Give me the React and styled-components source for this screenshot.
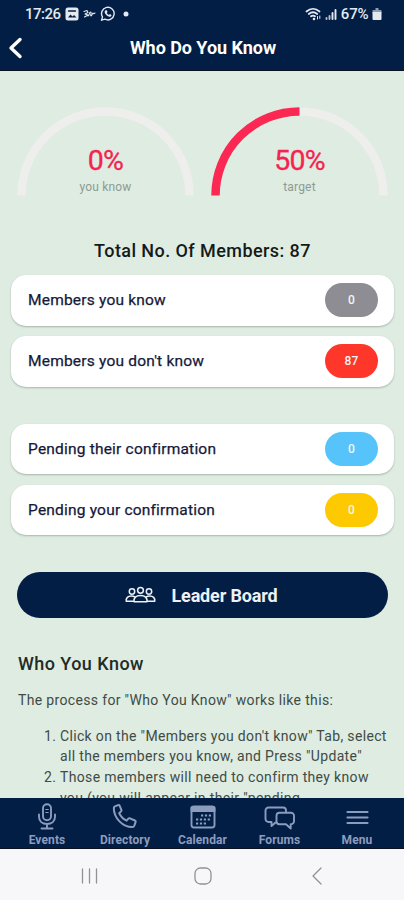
import React from "react";
import styled, { createGlobalStyle } from "styled-components";

const GlobalStyle = createGlobalStyle`
  * {
    box-sizing: border-box;
  }
  body {
    margin: 0;
    font-family: Roboto, "Liberation Sans", sans-serif;
  }
`;

const Screen = styled.div`
  display: flex;
  flex-direction: column;
  width: 404px;
  height: 900px;
  overflow: hidden;
  background: #deece2;
`;

const Header = styled.header`
  flex: none;
  height: 71px;
  background: #021e45;
  border-bottom: 1px solid #0a1220;
  color: #fff;
`;

const StatusBar = styled.div`
  display: flex;
  align-items: center;
  justify-content: space-between;
  height: 28px;
  padding: 0 22px 0 25px;
  font-size: 15px;
  font-weight: 500;
  color: #e4e8ef;
`;

const StatusGroup = styled.div`
  display: flex;
  align-items: center;
  gap: ${props => props.gap}px;
  letter-spacing: ${props => props.spacing || 0}px;

  svg {
    display: block;
  }
`;

const TitleBar = styled.div`
  display: grid;
  grid-template-columns: 30px 1fr 30px;
  align-items: center;
  height: 39px;
`;

const BackButton = styled.button`
  display: flex;
  height: 24px;
  padding: 0 0 0 8px;
  border: 0;
  background: none;
  color: #fff;
`;

const Title = styled.h1`
  margin: 0;
  padding-left: 2px;
  font-size: 18px;
  font-weight: 700;
  letter-spacing: -0.05px;
  text-align: center;
  white-space: nowrap;
`;

const Content = styled.main`
  flex: 1;
  min-height: 0;
  overflow: hidden;
`;

const Gauges = styled.div`
  display: flex;
  gap: 17px;
  padding: 36px 17px 0;
`;

const GaugeBox = styled.div`
  display: grid;
  width: 177px;
  height: 90px;

  > * {
    grid-area: 1 / 1;
  }
`;

const GaugeText = styled.div`
  padding-top: 37px;
  text-align: center;
`;

const Percent = styled.div`
  font-size: 28.5px;
  line-height: 34px;
  letter-spacing: -0.8px;
  color: #f5234f;
  -webkit-text-stroke: 0.3px #f5234f;
`;

const GaugeLabel = styled.div`
  font-size: 12px;
  line-height: 18px;
  letter-spacing: 0.2px;
  color: #8e9a93;
`;

const Total = styled.h2`
  margin: 43px 0 13px;
  padding-left: 1px;
  font-size: 18px;
  font-weight: 500;
  line-height: 22px;
  letter-spacing: 0.43px;
  text-align: center;
  color: #141a18;
`;

const CardGroup = styled.div`
  display: flex;
  flex-direction: column;
  gap: 10.5px;
  padding: 0 10px 0 11px;
  margin-bottom: 37px;
`;

const Card = styled.div`
  display: flex;
  align-items: center;
  justify-content: space-between;
  height: 50.5px;
  padding: 0 16px 0 17px;
  border-radius: 15px;
  background: #fff;
  box-shadow: 0 1px 2px rgba(60, 80, 70, 0.35);
  font-size: 15.5px;
  letter-spacing: 0.2px;
  color: #15193a;
  -webkit-text-stroke: 0.25px #15193a;
`;

const Badge = styled.span`
  width: 53px;
  height: 34px;
  border-radius: 17px;
  background: ${props => props.color};
  font-size: 12px;
  font-weight: 500;
  line-height: 34px;
  text-align: center;
  color: #f4f5f6;
  -webkit-text-stroke: 0;
`;

const LeaderButton = styled.button`
  display: flex;
  align-items: center;
  justify-content: center;
  gap: 15px;
  width: 371px;
  height: 46px;
  margin: 0 0 0 17px;
  padding: 0 2px 0 0;
  border: 0;
  border-radius: 23px;
  background: #021e45;
  font-family: inherit;
  font-size: 18px;
  font-weight: 700;
  letter-spacing: -0.15px;
  color: #eef1f5;
`;

const Info = styled.section`
  padding: 35px 10px 0 18px;
  font-size: 14px;
  line-height: 20.7px;
  letter-spacing: 0.34px;
  color: #414b45;
`;

const InfoTitle = styled.h3`
  margin: 0 0 15px;
  font-size: 18px;
  font-weight: 500;
  line-height: 22px;
  letter-spacing: 0.45px;
  color: #222b26;
`;

const Paragraph = styled.p`
  margin: 0 0 15px;
`;

const Steps = styled.ol`
  margin: 0;
  padding-left: 42px;
  white-space: nowrap;
`;

const NavBar = styled.nav`
  flex: none;
  display: grid;
  grid-template-columns: 94px 62px 93px 61px 94px;
  height: 51px;
  background: #021e45;
  border-bottom: 1px solid #0a1220;
`;

const NavItem = styled.div`
  display: flex;
  flex-direction: column;
  align-items: center;
  padding-top: 5px;
  font-size: 12px;
  font-weight: 700;
  line-height: 14px;
  letter-spacing: 0.1px;
  white-space: nowrap;
  color: #8c9cbd;

  svg {
    flex: none;
    margin-bottom: 2px;
  }
`;

const SystemBar = styled.footer`
  flex: none;
  display: grid;
  grid-template-columns: 113px 118px 12px;
  align-items: center;
  height: 51px;
  padding: 3px 0 0 80px;
  background: #f7f7f9;
  color: #929295;
`;

const Gauge = ({ value, label }) => {
  const arc = "M4.5 88.5A84 84 0 0 1 172.5 88.5";
  return (
    <GaugeBox>
      <svg width="177" height="90" fill="none" strokeWidth="8.5">
        <path d={arc} stroke="#eeeeed" />
        {value > 0 && (
          <path
            d={arc}
            stroke="#fa2853"
            pathLength="100"
            strokeDasharray={`${value} 100`}
          />
        )}
      </svg>
      <GaugeText>
        <Percent>{value}%</Percent>
        <GaugeLabel>{label}</GaugeLabel>
      </GaugeText>
    </GaugeBox>
  );
};

const CountCard = ({ label, count, color }) => (
  <Card>
    {label}
    <Badge color={color}>{count}</Badge>
  </Card>
);

const Icon = ({ children, width = 30, height = 28, stroke = 1.7 }) => (
  <svg
    width={width}
    height={height}
    viewBox={`0 0 ${width} ${height}`}
    fill="none"
    stroke="currentColor"
    strokeWidth={stroke}
    strokeLinecap="round"
    strokeLinejoin="round"
  >
    {children}
  </svg>
);

const PictureIcon = () => (
  <Icon width={14} height={14}>
    <rect x="0.5" y="0.5" width="13" height="13" rx="2.5" fill="currentColor" stroke="none" />
    <path d="M3 10.5l2.500-3 2 2 1.500-1.500 2.500 2.500z" fill="#021e45" stroke="none" />
    <path d="M3.500 4h7" stroke="#021e45" strokeWidth="1.300" />
  </Icon>
);

const SquiggleIcon = () => (
  <Icon width={13} height={12} stroke={1.1}>
    <path d="M1 3.5l3-1 1 2-3 1.5 3 1-3.5 2M5 8c2-1 1-4 2.5-4s-.5 4 .5 4 1.5-3 2-3 0 1.500 2 0" />
  </Icon>
);

const WhatsappIcon = () => (
  <Icon width={16} height={16} stroke={1.4}>
    <path d="M1.500 14.200l1-3.300a6.300 6.300 0 1 1 2.500 2.300z" />
    <path
      d="M5.600 4.200l1.200.1.700 1.700-.7.900c.5 1 1.200 1.600 2.200 2l.9-.8 1.600.9c0 1.500-1.300 2-2.400 1.700-2.200-.6-3.900-2.300-4.400-4.200-.2-.9.200-1.800.9-2.300z"
      fill="currentColor"
      stroke="none"
    />
  </Icon>
);

const WifiIcon = () => (
  <Icon width={17} height={14} stroke={1.8}>
    <path d="M1.500 4.500c4-3.500 9-3.500 13 0M3.800 7c2.700-2.200 5.700-2.200 8.400 0M6 9.300c1.400-1 2.600-1 4 0" />
    <path d="M12.500 9.500v2.500M14.800 9v2.500" strokeWidth="1" />
    <circle cx="9" cy="12" r="1.300" fill="currentColor" stroke="none" />
  </Icon>
);

const SignalIcon = () => (
  <Icon width={12} height={14} stroke={1.9}>
    <path d="M1.500 12v-1M4.500 12V9" opacity="0.8" />
    <path d="M7.500 12V6M10.500 12V3" />
  </Icon>
);

const BatteryIcon = () => (
  <Icon width={10} height={14}>
    <path d="M3.500 1h3v2H9a.5.5 0 0 1 .5.5V6h-9V3.500A.5.500 0 0 1 1 3h2.500z" fill="#8d9db5" stroke="none" />
    <path d="M.5 5h9v7a1 1 0 0 1-1 1h-7a1 1 0 0 1-1-1z" fill="currentColor" stroke="none" />
  </Icon>
);

const PeopleIcon = () => (
  <Icon width={31} height={18} stroke={1.5}>
    <circle cx="7" cy="5.500" r="2.700" />
    <circle cx="15.500" cy="4.300" r="2.900" />
    <circle cx="24" cy="5.500" r="2.700" />
    <path d="M8.500 15.300H1.300c-.6-3.500 1.700-5.300 5-5.300 1.300 0 2.500.2 3.400.9M22.500 15.300h7.200c.6-3.500-1.700-5.300-5-5.300-1.300 0-2.500.2-3.400.9" />
    <path d="M9 15.700c-.5-4 2-6.200 6.500-6.200s7 2.200 6.500 6.200z" />
  </Icon>
);

const MicIcon = () => (
  <Icon stroke={1.9}>
    <rect x="11" y="1.300" width="8" height="16" rx="4" />
    <path d="M13.800 6.500h2.400M13.800 9.500h2.400" strokeWidth="1.200" />
    <path d="M7 11.500v2.300c0 4.300 3.300 7.200 8 7.200s8-2.900 8-7.200v-2.300M15 21v4.300M9.500 25.500h11" />
  </Icon>
);

const PhoneIcon = () => (
  <Icon stroke={2}>
    <path d="M5 3.400l3-1.300c.7-.3 1.400 0 1.700.7l1.700 4c.2.600.1 1.200-.4 1.600L9.200 10.200c1.600 3.200 4 5.900 7.400 7.500l1.700-2c.4-.5 1-.6 1.600-.4l5 2.200c.7.300 1 1 .7 1.700l-1.300 3.400c-.3.700-.8 1.400-1.800 1.500C12.700 24.300 3.800 15 3.800 5c0-.8.500-1.300 1.200-1.600z" />
  </Icon>
);

const CalendarIcon = () => (
  <Icon stroke={1.9}>
    <rect x="3.500" y="3.500" width="23" height="21" rx="2.500" />
    <path d="M3.500 4.500h23v3.500h-23z" fill="currentColor" />
    <path
      d="M13 12.500h10M8 16.500h15M8 20.500h10"
      strokeWidth="2.200"
      strokeLinecap="butt"
      strokeDasharray="2.200 1.700"
    />
  </Icon>
);

const ForumsIcon = () => (
  <Icon width={34} stroke={1.9}>
    <path d="M12.500 19.500L8.500 23v-4H5.500a3 3 0 0 1-3-3V7.500a3 3 0 0 1 3-3H20a3 3 0 0 1 3 3v1" />
    <path d="M16.500 9.800H28a3 3 0 0 1 3 3v5.500a3 3 0 0 1-3 3h-.3v4.200l-4.700-4.200h-6.500a3 3 0 0 1-3-3v-5.500a3 3 0 0 1 3-3z" />
  </Icon>
);

const MenuIcon = () => (
  <Icon stroke={2.2}>
    <path d="M5.500 9h20M5.500 14.500h20M5.500 20h20" />
  </Icon>
);

export default function App() {
  return (
    <>
      <GlobalStyle />
      <Screen>
        <Header>
          <StatusBar>
            <StatusGroup gap={4} spacing={-0.5}>
              <span>17:26</span>
              <PictureIcon />
              <SquiggleIcon />
              <WhatsappIcon />
              <svg width="14" height="6">
                <circle cx="6" cy="3" r="2.5" fill="currentColor" />
              </svg>
            </StatusGroup>
            <StatusGroup gap={3.5} spacing={-0.1}>
              <WifiIcon />
              <SignalIcon />
              <span>67%</span>
              <BatteryIcon />
            </StatusGroup>
          </StatusBar>
          <TitleBar>
            <BackButton>
              <Icon width={16} height={24} stroke={3.4}>
                <path d="M12 3.500L3 12l9 8.500" />
              </Icon>
            </BackButton>
            <Title>Who Do You Know</Title>
          </TitleBar>
        </Header>
        <Content>
          <Gauges>
            <Gauge value={0} label="you know" />
            <Gauge value={50} label="target" />
          </Gauges>
          <Total>Total No. Of Members: 87</Total>
          <CardGroup>
            <CountCard label="Members you know" count={0} color="#8e8d93" />
            <CountCard label="Members you don't know" count={87} color="#ff372b" />
          </CardGroup>
          <CardGroup>
            <CountCard label="Pending their confirmation" count={0} color="#56c3fb" />
            <CountCard label="Pending your confirmation" count={0} color="#fdc900" />
          </CardGroup>
          <LeaderButton>
            <PeopleIcon />
            Leader Board
          </LeaderButton>
          <Info>
            <InfoTitle>Who You Know</InfoTitle>
            <Paragraph>The process for "Who You Know" works like this:</Paragraph>
            <Steps>
              <li>
                Click on the "Members you don't know" Tab, select
                <br />
                all the members you know, and Press "Update"
              </li>
              <li>
                Those members will need to confirm they know
                <br />
                you (you will appear in their "pending
              </li>
            </Steps>
          </Info>
        </Content>
        <NavBar>
          <NavItem>
            <MicIcon />
            Events
          </NavItem>
          <NavItem>
            <PhoneIcon />
            Directory
          </NavItem>
          <NavItem>
            <CalendarIcon />
            Calendar
          </NavItem>
          <NavItem>
            <ForumsIcon />
            Forums
          </NavItem>
          <NavItem>
            <MenuIcon />
            Menu
          </NavItem>
        </NavBar>
        <SystemBar>
          <Icon width={20} height={20} stroke={1.3}>
            <path d="M2.500 3v14M9.500 3v14M16.500 3v14" />
          </Icon>
          <Icon width={20} height={20} stroke={1.3}>
            <rect x="2" y="2" width="16" height="16" rx="5.500" />
          </Icon>
          <Icon width={12} height={20} stroke={1.3}>
            <path d="M10 2L2 10l8 8" />
          </Icon>
        </SystemBar>
      </Screen>
    </>
  );
}
